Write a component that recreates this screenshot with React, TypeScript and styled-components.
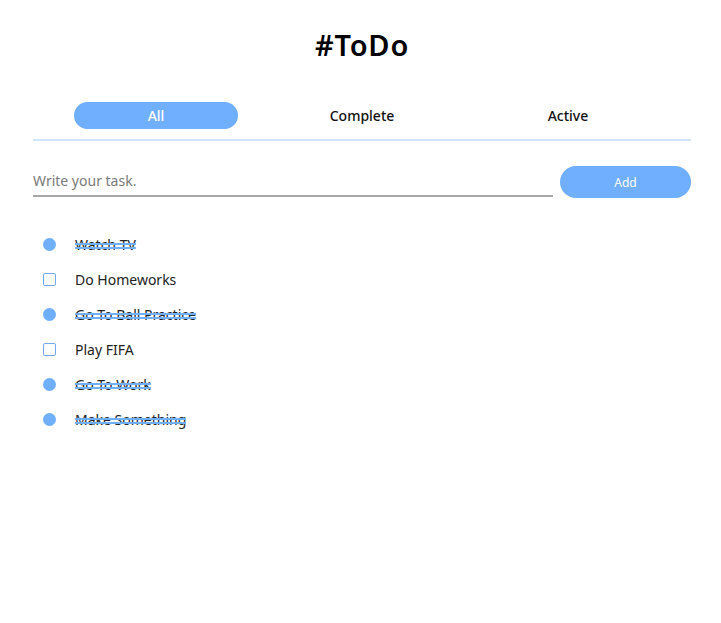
import React, { useState } from "react";
import styled, { createGlobalStyle } from "styled-components";

const Global = createGlobalStyle`
  html, body { margin: 0; padding: 0; background: #fff; }
  body { font-family: "Noto Sans", "Open Sans", sans-serif; color: #1e1e1e; }
`;

const BLUE = "#70aefe";

const Page = styled.div`
  margin: 0 30px 0 33px;
  display: flex;
  flex-direction: column;
`;

const Title = styled.h1`
  margin: 26px 0 0;
  text-align: center;
  font-size: 29px;
  font-weight: 600;
  letter-spacing: 0.8px;
  line-height: 38px;
  color: #000;
`;

const Tabs = styled.div`
  margin-top: 38px;
  display: flex;
  padding: 0 20px 10px;
  border-bottom: 2px solid #d2e5fc;
`;

const Tab = styled.button<{ $active?: boolean }>`
  flex: 1;
  display: flex;
  justify-content: center;
  background: none;
  border: none;
  padding: 0;
  cursor: pointer;
  font-family: inherit;
  span {
    width: 80%;
    height: 27px;
    line-height: 27px;
    border-radius: 14px;
    font-size: 14px;
    font-weight: 500;
    color: ${(p) => (p.$active ? "#fff" : "#111")};
    background: ${(p) => (p.$active ? BLUE : "transparent")};
  }
`;

const Form = styled.form`
  margin-top: 25px;
  display: flex;
  align-items: flex-end;
  gap: 7px;
`;

const Input = styled.input`
  flex: 1;
  border: none;
  border-bottom: 2px solid #a6a6a6;
  outline: none;
  font-family: inherit;
  font-size: 14px;
  padding: 0 0 2px;
  height: 26px;
  color: #222;
  &::placeholder { color: #7a7a7a; }
`;

const AddButton = styled.button`
  width: 131px;
  height: 32px;
  border: none;
  border-radius: 16px;
  background: ${BLUE};
  color: #fff;
  font-family: inherit;
  font-size: 12px;
  cursor: pointer;
  margin-bottom: -1px;
`;

const List = styled.ul`
  list-style: none;
  margin: 30px 0 0;
  padding: 0 0 0 10px;
  display: flex;
  flex-direction: column;
`;

const Item = styled.li`
  height: 35px;
  display: flex;
  align-items: center;
  gap: 19px;
`;

const Dot = styled.span`
  width: 13px;
  height: 13px;
  border-radius: 50%;
  background: ${BLUE};
  flex-shrink: 0;
`;

const Box = styled.span`
  width: 11px;
  height: 11px;
  border: 1px solid #74a9ee;
  border-radius: 2px;
  background: #fff;
  flex-shrink: 0;
`;

const Label = styled.span<{ $done?: boolean }>`
  position: relative;
  font-size: 14px;
  line-height: 19px;
  color: #222;
  &::after {
    content: "";
    display: ${(p) => (p.$done ? "block" : "none")};
    position: absolute;
    left: 0;
    right: 0;
    top: 8px;
    height: 1.5px;
    border-top: 2px solid ${BLUE};
    border-bottom: 2px solid ${BLUE};
  }
`;

const todos = [
  { text: "Watch TV", done: true },
  { text: "Do Homeworks", done: false },
  { text: "Go To Ball Practice", done: true },
  { text: "Play FIFA", done: false },
  { text: "Go To Work", done: true },
  { text: "Make Something", done: true },
];

export default function App() {
  const [tab, setTab] = useState("All");
  return (
    <>
      <Global />
      <Page>
        <Title>#ToDo</Title>
        <Tabs>
          {["All", "Complete", "Active"].map((t) => (
            <Tab key={t} $active={tab === t} onClick={() => setTab(t)}>
              <span>{t}</span>
            </Tab>
          ))}
        </Tabs>
        <Form onSubmit={(e) => e.preventDefault()}>
          <Input placeholder="Write your task." />
          <AddButton type="submit">Add</AddButton>
        </Form>
        <List>
          {todos.map((t) => (
            <Item key={t.text}>
              {t.done ? <Dot /> : <Box />}
              <Label $done={t.done}>{t.text}</Label>
            </Item>
          ))}
        </List>
      </Page>
    </>
  );
}
